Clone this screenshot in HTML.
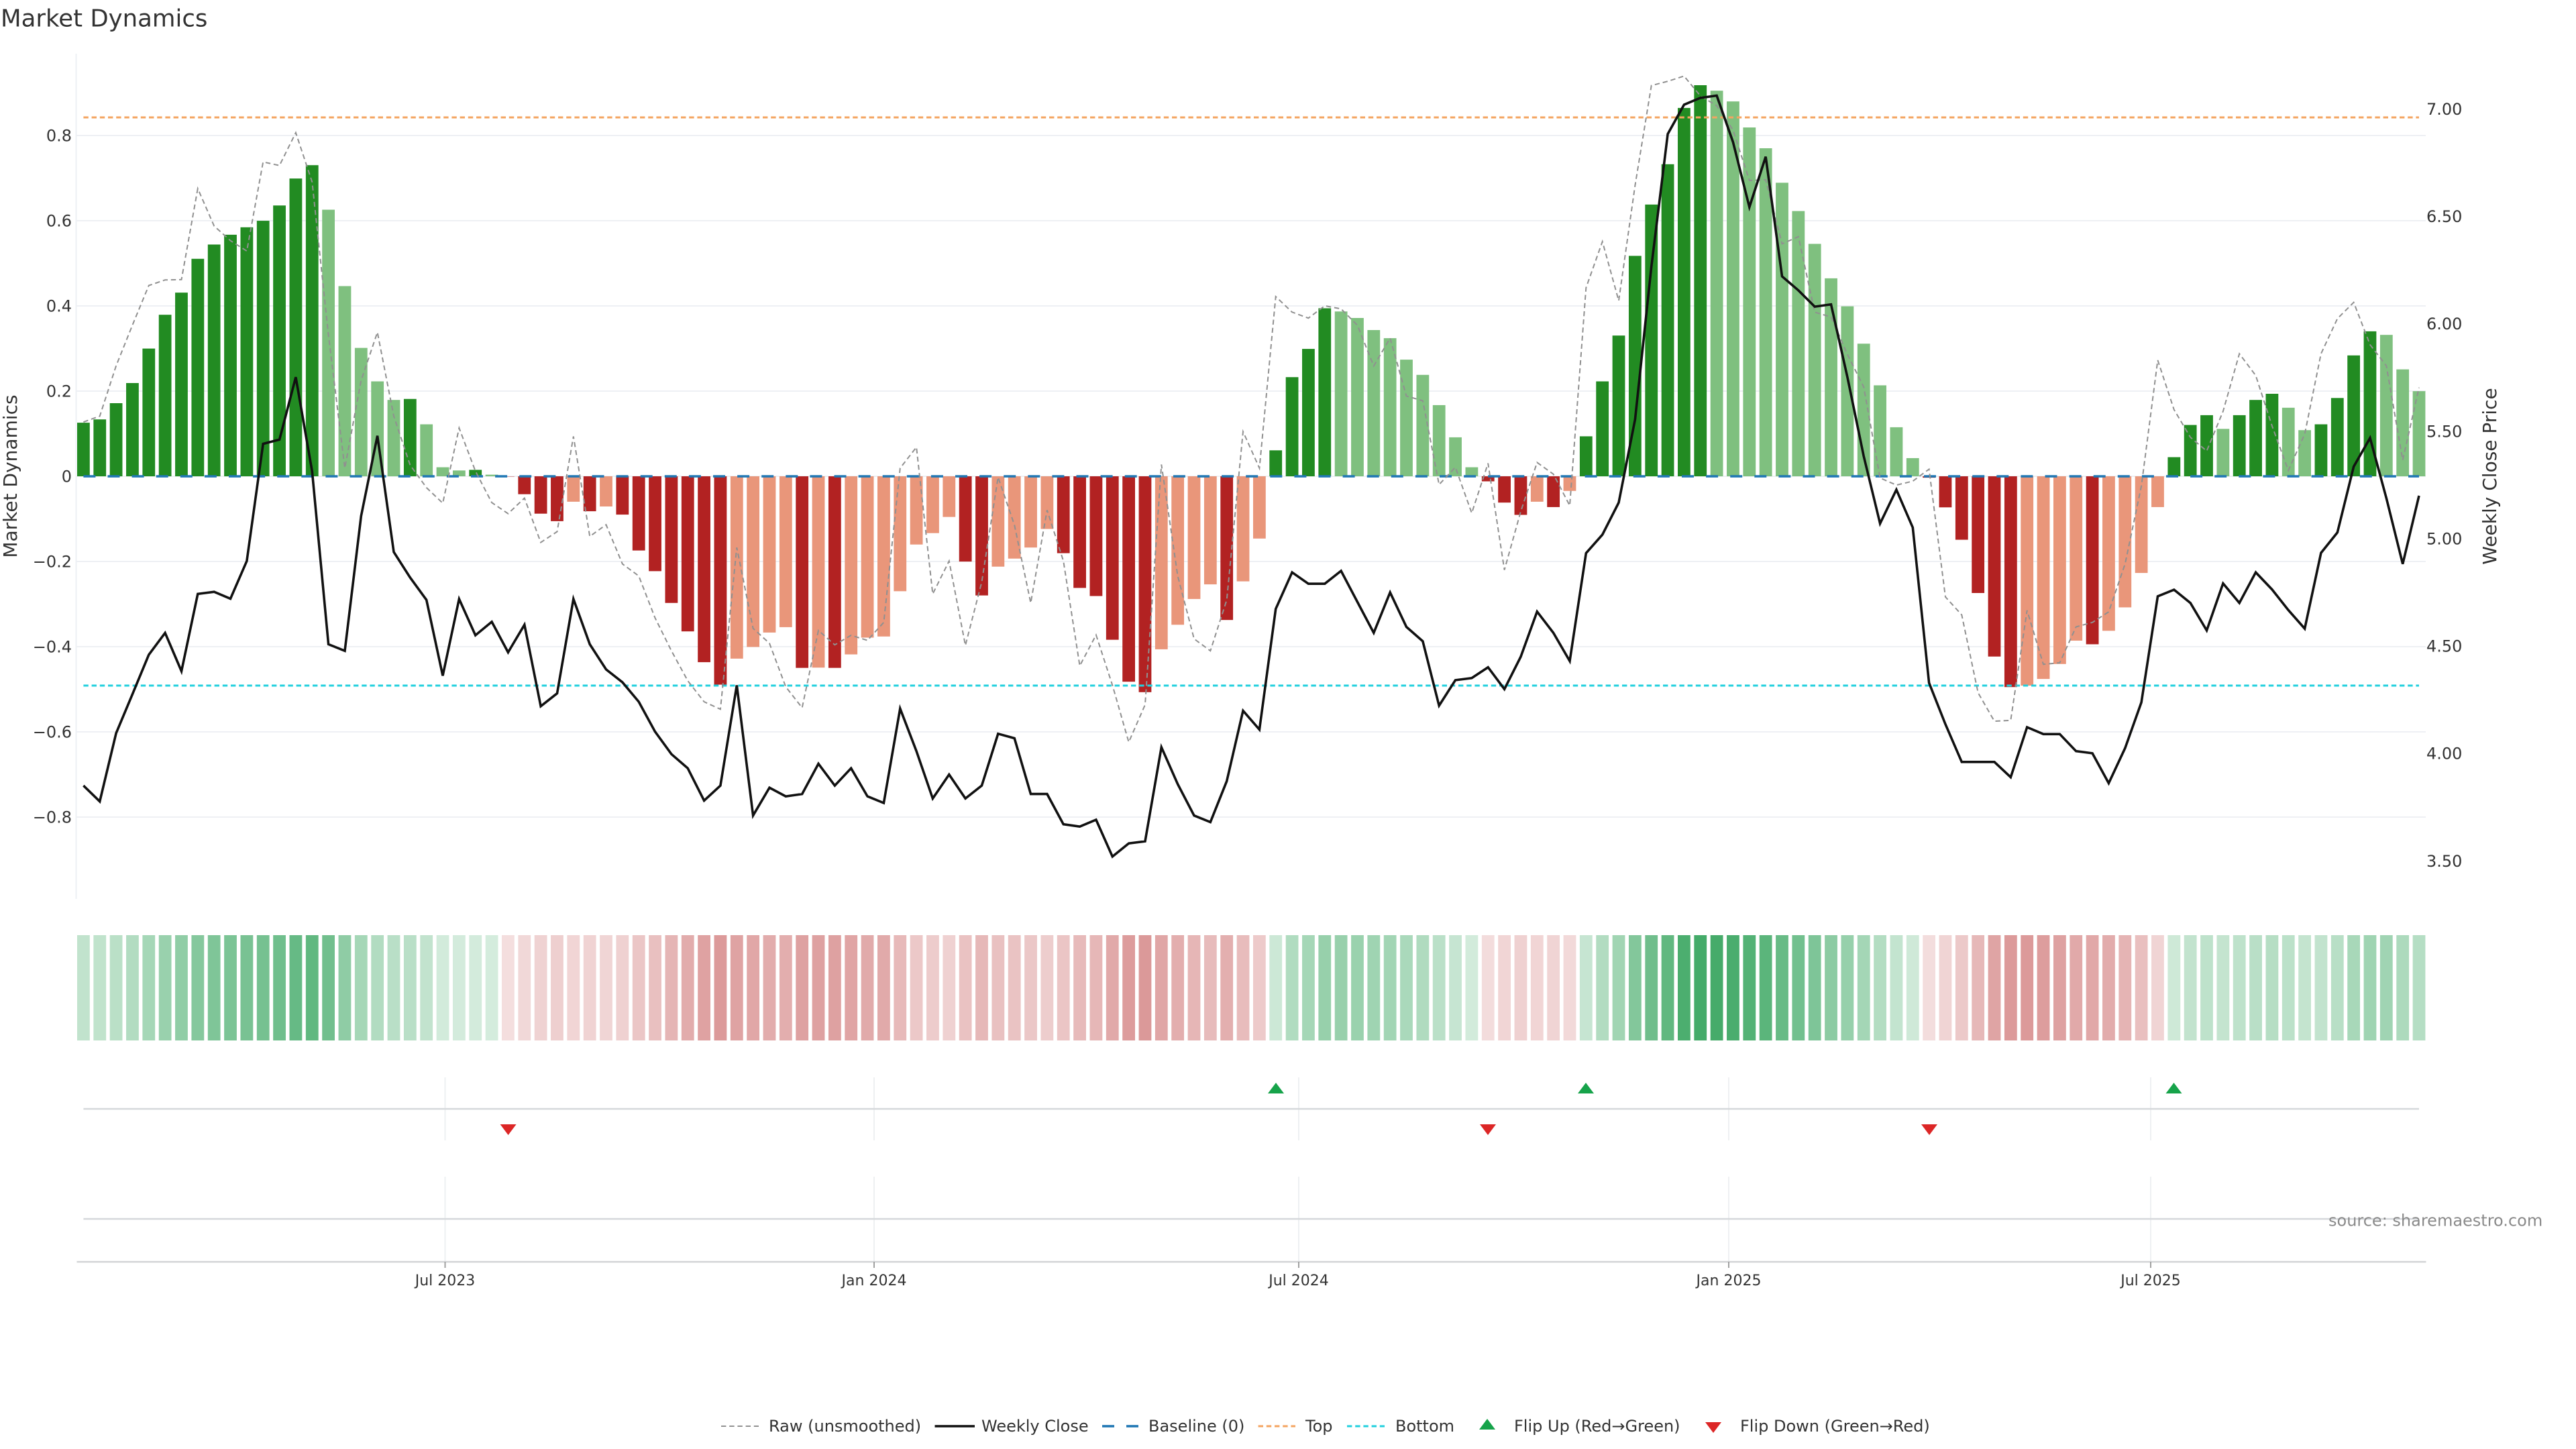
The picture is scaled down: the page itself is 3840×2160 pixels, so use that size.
<!DOCTYPE html>
<html lang="en">
<head>
<meta charset="utf-8">
<title>Market Dynamics</title>
<style>
html,body{margin:0;padding:0;background:#fff;width:3840px;height:2160px;overflow:hidden}
svg{display:block}
text{font-family:"DejaVu Sans","Liberation Sans",sans-serif}
.tk{font-size:24px;fill:#333}
.dt{font-size:22px;fill:#333;text-anchor:middle}
.lg{font-size:24px;fill:#333}
</style>
</head>
<body>
<svg id="s" xmlns="http://www.w3.org/2000/svg" width="3840" height="2160" viewBox="0 0 3840 2160">
<rect width="3840" height="2160" fill="#fff"/>
<text x="1" y="39.5" font-size="35.5" fill="#333">Market Dynamics</text>

<!-- horizontal grid -->
<g stroke="#eef0f4" stroke-width="2">
<path d="M114 202H3616M114 329H3616M114 456H3616M114 583H3616M114 710H3616M114 837H3616M114 964H3616M114 1091H3616M114 1218H3616"/>
<path d="M113.5 80V1340"/>
</g>

<g id="bars"></g>
<path d="M124.4 710H3606" stroke="#1f77b4" stroke-width="3.6" stroke-dasharray="18 18.1" fill="none"/>
<path d="M124.4 175H3606" stroke="#f4a460" stroke-width="3" stroke-dasharray="7.4 4.8" fill="none"/>
<path d="M124.4 1022H3606" stroke="#22d0de" stroke-width="3" stroke-dasharray="7.4 4.8" fill="none"/>
<path id="raw" fill="none" stroke="#909090" stroke-width="2" stroke-dasharray="7.4 4.8"/>
<path id="close" fill="none" stroke="#111" stroke-width="3.6" stroke-linejoin="miter"/>

<!-- left ticks -->
<g class="tk" text-anchor="end">
<text class="tk" x="107" y="210.5">0.8</text>
<text class="tk" x="107" y="337.5">0.6</text>
<text class="tk" x="107" y="464.5">0.4</text>
<text class="tk" x="107" y="591.5">0.2</text>
<text class="tk" x="107" y="718.5">0</text>
<text class="tk" x="107" y="845.5">−0.2</text>
<text class="tk" x="107" y="972.5">−0.4</text>
<text class="tk" x="107" y="1099.5">−0.6</text>
<text class="tk" x="107" y="1226.5">−0.8</text>
</g>
<!-- right ticks -->
<g>
<text class="tk" x="3617" y="171">7.00</text>
<text class="tk" x="3617" y="331">6.50</text>
<text class="tk" x="3617" y="491">6.00</text>
<text class="tk" x="3617" y="651.5">5.50</text>
<text class="tk" x="3617" y="811.5">5.00</text>
<text class="tk" x="3617" y="971.5">4.50</text>
<text class="tk" x="3617" y="1131.5">4.00</text>
<text class="tk" x="3617" y="1292">3.50</text>
</g>
<text transform="translate(25 710) rotate(-90)" text-anchor="middle" font-size="28" fill="#333">Market Dynamics</text>
<text transform="translate(3721 710) rotate(-90)" text-anchor="middle" font-size="28" fill="#333">Weekly Close Price</text>

<g id="strip"></g>

<!-- flip panels -->
<g stroke="#eef0f2" stroke-width="2">
<path d="M663.5 1606V1700M1303 1606V1700M1936 1606V1700M2577 1606V1700M3206 1606V1700"/>
<path d="M663.5 1754V1880M1303 1754V1880M1936 1754V1880M2577 1754V1880M3206 1754V1880"/>
</g>
<g stroke="#d5d8db" stroke-width="2.4">
<path d="M124.4 1653H3606M124.4 1817H3606"/>
</g>
<path d="M114.5 1881H3616.5" stroke="#d2d4d6" stroke-width="2.6"/>
<path d="M663.5 1881V1890M1303 1881V1890M1936 1881V1890M2577 1881V1890M3206 1881V1890" stroke="#a0a0a0" stroke-width="2"/>

<g fill="#dc2626">
<path d="M745.6 1676h24l-12 16z"/>
<path d="M2206 1676h24l-12 16z"/>
<path d="M2864 1676h24l-12 16z"/>
</g>
<g fill="#16a34a">
<path d="M1890 1630h24l-12 -16z"/>
<path d="M2352 1630h24l-12 -16z"/>
<path d="M3228.5 1630h24l-12 -16z"/>
</g>

<text class="dt" x="663.5" y="1916">Jul 2023</text>
<text class="dt" x="1303" y="1916">Jan 2024</text>
<text class="dt" x="1936" y="1916">Jul 2024</text>
<text class="dt" x="2577" y="1916">Jan 2025</text>
<text class="dt" x="3206" y="1916">Jul 2025</text>

<text x="3471" y="1827.5" font-size="24" fill="#8a8a8a">source: sharemaestro.com</text>

<!-- legend -->
<path d="M1075 2126H1131" stroke="#909090" stroke-width="2" stroke-dasharray="7.4 4.8"/>
<text class="lg" x="1146" y="2134">Raw (unsmoothed)</text>
<path d="M1393.5 2126H1453" stroke="#111" stroke-width="3.6"/>
<text class="lg" x="1463" y="2134">Weekly Close</text>
<path d="M1643 2126H1697" stroke="#1f77b4" stroke-width="3.6" stroke-dasharray="18 18"/>
<text class="lg" x="1712" y="2134">Baseline (0)</text>
<path d="M1875.6 2126H1931" stroke="#f4a460" stroke-width="3" stroke-dasharray="7.4 4.8"/>
<text class="lg" x="1946" y="2134">Top</text>
<path d="M2008 2126H2064" stroke="#22d0de" stroke-width="3" stroke-dasharray="7.4 4.8"/>
<text class="lg" x="2080" y="2134">Bottom</text>
<path d="M2205 2131h24l-12 -16z" fill="#16a34a"/>
<text class="lg" x="2257" y="2134">Flip Up (Red→Green)</text>
<path d="M2542 2120h24l-12 16z" fill="#dc2626"/>
<text class="lg" x="2594" y="2134">Flip Down (Green→Red)</text>
</svg>
<script>
(function(){
var a=function(y){return y/2.0632},b=function(y){return 680+y/2.24};
function cat(){var o=[];for(var i=0;i<arguments.length;i+=2){var f=arguments[i],v=arguments[i+1];for(var j=0;j<v.length;j++)o.push(f(v[j]))}return o}
var X=function(i){return 124.4+24.347*i};
var bars=cat(
a,[1300,1290,1240,1178,1072,968,900,796,752,722,699,679,632,549,508,645,880,1070,1173,1230,1227,1305,1437,1447,1445,1460],
b,[68,127,192,217,152,184,168,195,315,384,490,585,688,763,676,637,589,571,707,706,707,662,606,602,451,295,257,203,352,465,369,342,305,243,324,440,467,613,753,788,645,563,477,428,547,418,275],
a,[1385,1160,1073,948,958,978,1015,1040,1106,1153,1246,1345,1437],
b,[84,155,196,152,170,116],
a,[1342,1173,1032,787,629,505,332,262,279,312,392,456,562,649,750,856,942,1057,1185,1314,1409],
b,[72,171,279,457,669,771,766,744,694,616,628,583,505,390,170],
a,[1406,1307,1277,1319,1277,1230,1211,1254,1323,1305,1224,1093,1019,1030,1136,1203]);
var kind="DDDDDDDDDDDDDDDLLLLLDLLLDL"+
"DDDDLDLDDDDDDDLLLLDLDLLLLLLLDDLLLLDDDDDDLLLLDLL"+
"DDDDLLLLLLLLL"+"DDDLDL"+
"DDDDDDDD"+"LLLLLLLLLLLLL"+
"DDDDDD"+"LLLL"+"D"+"LLLL"+
"DDDLDDDLLDDDDLLL";
var h='',st='',Z=710;
for(var i=0;i<bars.length;i++){
 var y=bars[i],x=X(i)-9.4,pos=y<Z,d=kind[i]==='D';
 var c=pos?(d?'#228b22':'#7fc07f'):(d?'#b22222':'#e9967a');
 var t=Math.min(y,Z),ht=Math.abs(y-Z);
 h+='<rect x="'+x.toFixed(2)+'" y="'+t.toFixed(1)+'" width="18.8" height="'+ht.toFixed(1)+'" fill="'+c+'"/>';
 var v=ht/635,al=pos?(0.18+0.68*v):(0.15+0.62*v);
 st+='<rect x="'+x.toFixed(2)+'" y="1394" width="18.8" height="157" fill="'+(pos?'#169644':'#b22222')+'" fill-opacity="'+al.toFixed(3)+'"/>';
}
document.getElementById('bars').innerHTML=h;
document.getElementById('strip').innerHTML=st;
function path(v){var s='';for(var i=0;i<v.length;i++)s+=(i?'L':'M')+X(i).toFixed(1)+' '+v[i].toFixed(1);return s}
var raw=cat(
a,[1298,1280,1125,1000,878,861,860,580,695,740,772,498,509,408,560,1030,1440,1170,1022,1280,1430],
b,[105,157,-94,50,155,192,140,288,252,-66,268,229,360,400,540,650,750,820,845,305,575,625,770,840,582,630,598,615,555,40,-30,460,350,632,420,70,230,490,180,350,700,597,765,955,830,28,400,610,650,480,-82,40,-533,-481,-461,-502,-492,-437,-301,-394,-201,-185,95,37,190,24,380,185,21,60,165],
a,[885,743,925,570,263,250,234,295,325,400,555,553,750,728,960,975,1090,1190,1470,1492,1480,1443],
b,[470,530,790,885,882,515,695,690,570,555,520,360,100],
a,[1108,1260,1345,1387,1265,1088,1155,1310,1447,1335,1088,980,930,1060,1125,1415,1192]);
var close=cat(
b,[1100,1153,925,795,663,590,718,460,453,476,350],
a,[1365,1352,1160,1450],
b,[628,650,200,-68,320,405,480,733,477,598,553,655,563,835,792,477,628,712,755,820,920,995,1042,1150,1100,765,1200,1107,1136,1128,1027,1100,1042,1136,1158,843,985,1143,1063,1143,1100,927,942,1128,1128,1229,1237,1214,1337,1293,1286,972,1095,1200,1222,1085,850,913,510,388,426,426,383,487,590,455,570,618,833,748,741,705,778,670,519,590,684,324,262,155],
a,[1290,820,412,322,301,294,437,637,482,850,893,943,936,1160,1403],
b,[225,112,238,757,895,1021,1021,1021,1072,905,928,928,985,992,1092,975,822,468,446,490,582,425,490,388,445,514,576,323,255,35],
a,[1347],
b,[140,360,132]);
document.getElementById('raw').setAttribute('d',path(raw));
document.getElementById('close').setAttribute('d',path(close));
})();
</script>
</body>
</html>
